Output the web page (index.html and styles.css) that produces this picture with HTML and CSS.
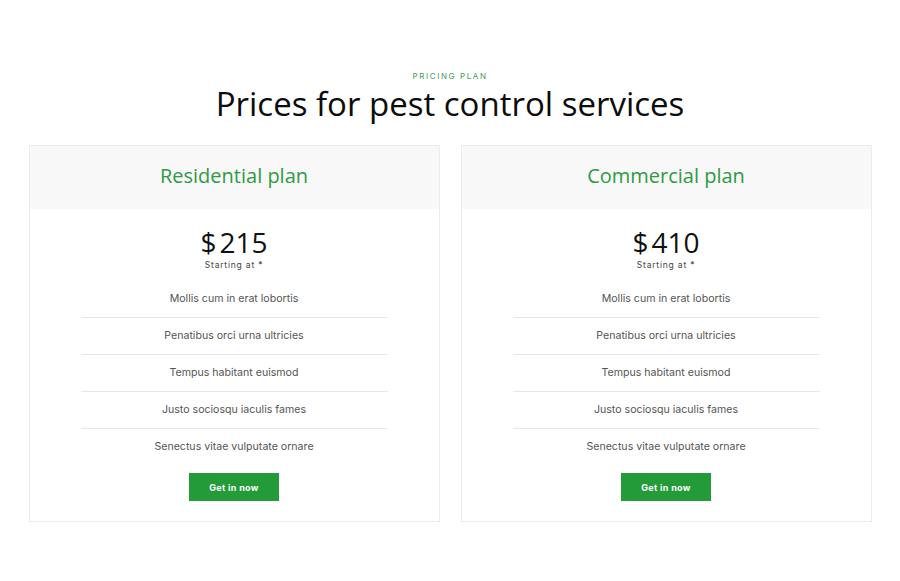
FILE: index.html
```html
<!DOCTYPE html>
<html>
<head>
<meta charset="utf-8">
<link rel="stylesheet" href="styles.css">
</head>
<body>
<section class="pricing">
  <p class="eyebrow">PRICING PLAN</p>
  <h1 class="heading">Prices for pest control services</h1>
  <div class="cards">
    <div class="card">
      <div class="card-head"><h2 class="plan">Residential plan</h2></div>
      <div class="price-block">
        <div class="price">$<span class="amount">215</span></div>
        <div class="starting">Starting at *</div>
      </div>
      <ul class="features">
        <li>Mollis cum in erat lobortis</li>
        <li>Penatibus orci urna ultricies</li>
        <li>Tempus habitant euismod</li>
        <li>Justo sociosqu iaculis fames</li>
        <li>Senectus vitae vulputate ornare</li>
      </ul>
      <a class="btn">Get in now</a>
    </div>
    <div class="card">
      <div class="card-head"><h2 class="plan">Commercial plan</h2></div>
      <div class="price-block">
        <div class="price">$<span class="amount">410</span></div>
        <div class="starting">Starting at *</div>
      </div>
      <ul class="features">
        <li>Mollis cum in erat lobortis</li>
        <li>Penatibus orci urna ultricies</li>
        <li>Tempus habitant euismod</li>
        <li>Justo sociosqu iaculis fames</li>
        <li>Senectus vitae vulputate ornare</li>
      </ul>
      <a class="btn">Get in now</a>
    </div>
  </div>
</section>
</body>
</html>
```
FILE: styles.css
```css
* { box-sizing: border-box; }
body {
  margin: 0;
  background: #fff;
  font-family: Inter, "Noto Sans", sans-serif;
}
.pricing {
  padding-top: 70px;
  display: flex;
  flex-direction: column;
  align-items: center;
}
.eyebrow {
  margin: 0;
  font-size: 8px;
  line-height: 12px;
  letter-spacing: 1.6px;
  color: #3f9a55;
}
.heading {
  margin: 2px 0 0;
  font-family: "Open Sans", sans-serif;
  font-weight: 400;
  font-size: 33px;
  line-height: 40px;
  color: #0c0c0c;
}
.cards {
  margin-top: 21px;
  display: grid;
  grid-template-columns: 411px 411px;
  gap: 21px;
}
.card {
  border: 1px solid #ececec;
  display: flex;
  flex-direction: column;
  align-items: center;
  padding-bottom: 20px;
}
.card-head {
  align-self: stretch;
  height: 63px;
  padding-bottom: 4px;
  background: #f8f8f8;
  display: flex;
  align-items: center;
  justify-content: center;
}
.plan {
  margin: 0;
  font-family: "Open Sans", sans-serif;
  font-weight: 400;
  font-size: 20px;
  line-height: 26px;
  color: #2f9a44;
}
.price-block {
  padding-top: 18px;
  display: flex;
  flex-direction: column;
  align-items: center;
}
.price {
  font-family: "Open Sans", sans-serif;
  font-size: 28px;
  line-height: 30px;
  color: #111;
}
.amount { margin-left: 3px; }
.starting {
  margin-top: 3px;
  font-size: 8.5px;
  line-height: 11px;
  letter-spacing: 0.8px;
  color: #444;
}
.features {
  list-style: none;
  margin: 10px 0 0;
  padding: 0;
  width: 307px;
}
.features li {
  text-align: center;
  font-size: 10.6px;
  line-height: 36px;
  color: #555;
  border-bottom: 1px solid #e8e8e8;
}
.features li:last-child { border-bottom: none; }
.btn {
  margin-top: 8px;
  width: 90px;
  height: 28px;
  background: #229b38;
  color: #fff;
  font-size: 9px;
  font-weight: 700;
  display: flex;
  align-items: center;
  justify-content: center;
  letter-spacing: 0.3px;
}
```
